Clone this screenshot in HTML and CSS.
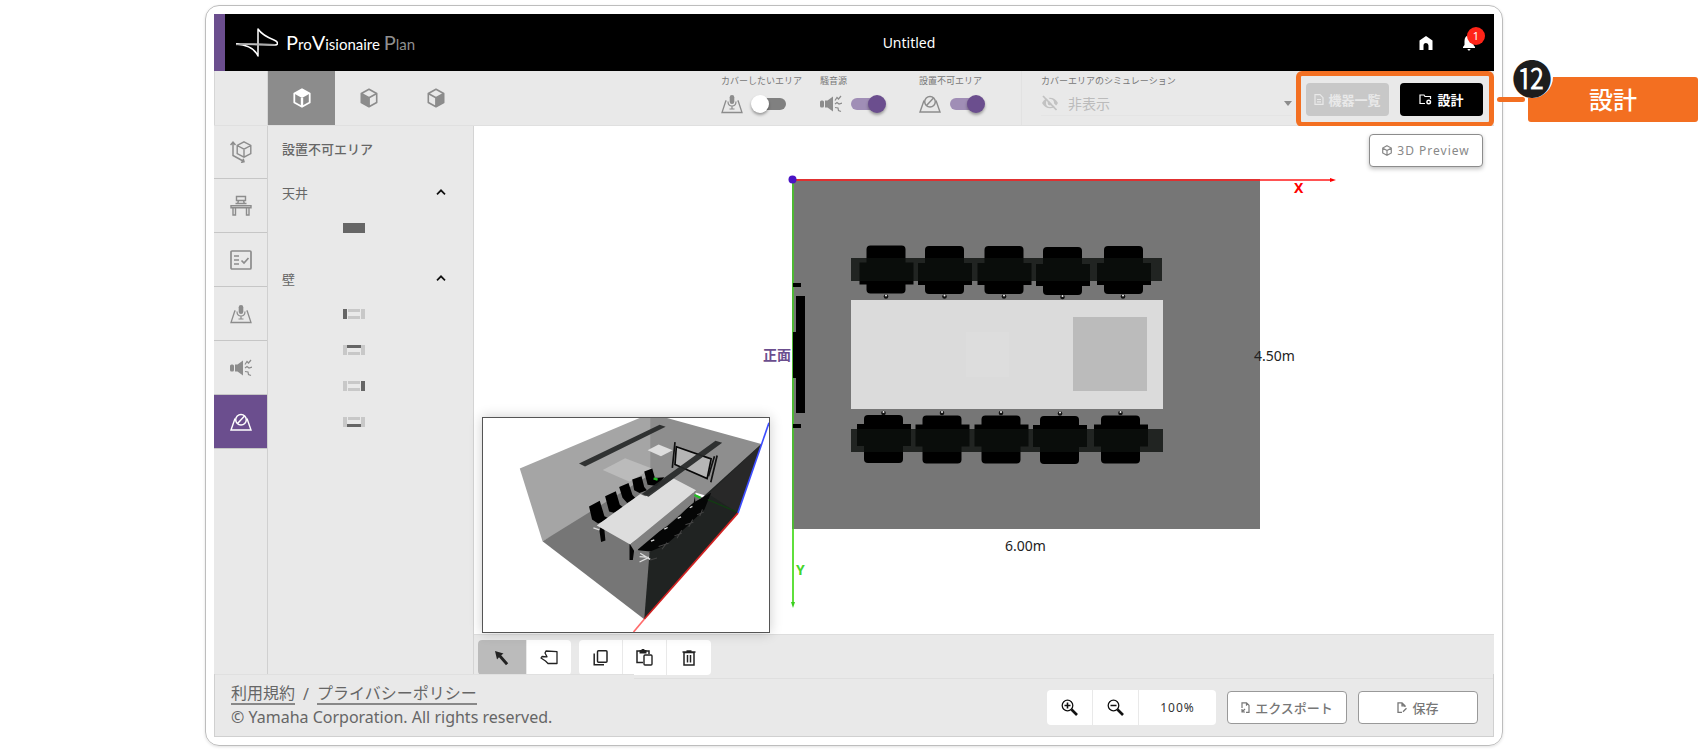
FILE: index.html
```html
<!DOCTYPE html>
<html lang="ja">
<head>
<meta charset="utf-8">
<title>ProVisionaire Plan</title>
<link rel="stylesheet" href="styles.css">
</head>
<body>
<svg class="defs" aria-hidden="true">
  <symbol id="i-mic" viewBox="0 0 22 20"><path d="M5.500 7H4.800L1 18.500h20L17.200 7h-.7" fill="none" stroke="currentColor" stroke-width="1.300"/><rect x="8.700" y="1" width="4.600" height="9" rx="2.300" fill="currentColor"/><path d="M7 7.500c0 3 1.300 4.500 4 4.500s4-1.500 4-4.500M11 12v3M8.500 15h5" fill="none" stroke="currentColor" stroke-width="1.200"/></symbol>
  <symbol id="i-noise" viewBox="0 0 22 20"><rect x="0" y="6.500" width="4" height="7" rx="1.500" fill="currentColor"/><path d="M5 6.500h2.500L13 2.500v15l-5.500-4H5z" fill="currentColor"/><path d="M15 6.500l2-3 1.500 1.500 2.500-3M15 10l2-1.500 2 1.500 3-1M15 13.500l3 .5.500 2.500 2.500 1" fill="none" stroke="currentColor" stroke-width="1.200"/></symbol>
  <symbol id="i-ban" viewBox="0 0 22 20"><path d="M5 6.500L1 18h20L17 6.500" fill="none" stroke="currentColor" stroke-width="1.400"/><circle cx="11" cy="7.800" r="5.300" fill="none" stroke="currentColor" stroke-width="1.500"/><path d="M7.500 11.500l7-7.500" stroke="currentColor" stroke-width="1.500"/></symbol>
</svg>
<div class="page">
<div class="card">
<div class="app">
  <header class="header">
    <div class="logo">
      <svg class="mark" viewBox="0 0 42 30" aria-hidden="true"><path d="M0 16c9 .5 18 3 22 12V1c4 6 11 9 16 11 5 2 4 5 1 5z" fill="none" stroke="#fff" stroke-width="1.500" stroke-linejoin="round"/><path d="M0 16.500c10-1 25-.5 39 .2" stroke="#aaa" stroke-width="1.600" fill="none"/></svg>
      <span class="wordmark"><b>P</b>ro<b>V</b>isionaire <span><b>P</b>lan</span></span>
    </div>
    <h1 class="title">Untitled</h1>
    <div class="header-actions">
      <button class="icon-btn" aria-label="ホーム"><svg width="14" height="14" viewBox="0 0 14 14"><path d="M7 0l6.500 4.500V14H9.500V9.500a2.500 2.500 0 0 0-5 0V14H.5V4.500z" fill="#fff"/></svg></button>
      <button class="icon-btn" aria-label="通知"><svg width="14" height="16" viewBox="0 0 14 16"><path d="M7 0c3 .5 4.500 3 4.500 6v4L13 12v1H1v-1l1.500-2V6C2.500 3 4 .5 7 0zM5.500 14h3c-.5 2-2.500 2-3 0z" fill="#fff"/></svg><span class="badge">1</span></button>
    </div>
  </header>

  <div class="toolbar">
    <div class="corner"></div>
    <nav class="views">
      <button class="view active" aria-label="上面"><svg width="18" height="20" viewBox="0 0 18 20"><path d="M9 1.200l7.700 4.300v9L9 18.800l-7.700-4.300v-9z" fill="none" stroke="#fff" stroke-width="1.800" stroke-linejoin="round"/><path d="M9 1l8 4.500L9 10 1 5.500z" fill="#fff"/><path d="M9 10v9" stroke="#fff" stroke-width="2.400"/></svg></button>
      <button class="view" aria-label="正面"><svg width="18" height="20" viewBox="0 0 18 20"><path d="M9 1.200l7.700 4.300v9L9 18.800l-7.700-4.300v-9zM1.300 5.500L9 9.800l7.700-4.300M9 9.800v9" fill="none" stroke="#8c8c8c" stroke-width="1.600" stroke-linejoin="round"/><path d="M1.300 5.500L9.500 10v9l-8.200-4.500z" fill="#8c8c8c"/></svg></button>
      <button class="view" aria-label="側面"><svg width="18" height="20" viewBox="0 0 18 20"><path d="M9 1.200l7.700 4.300v9L9 18.800l-7.700-4.300v-9zM1.300 5.500L9 9.800l7.700-4.300M9 9.800v9" fill="none" stroke="#8c8c8c" stroke-width="1.600" stroke-linejoin="round"/><path d="M16.700 5.500L8.500 10v9l8.200-4.500z" fill="#8c8c8c"/></svg></button>
    </nav>
    <div class="switches">
      <label class="switch"><span class="caption">カバーしたいエリア</span><span class="switch-row"><svg class="ic"><use href="#i-mic"/></svg><input type="checkbox"></span></label>
      <label class="switch"><span class="caption">騒音源</span><span class="switch-row"><svg class="ic"><use href="#i-noise"/></svg><input type="checkbox" checked></span></label>
      <label class="switch"><span class="caption">設置不可エリア</span><span class="switch-row"><svg class="ic"><use href="#i-ban"/></svg><input type="checkbox" checked></span></label>
    </div>
    <div class="simulation">
      <label class="caption" for="sim">カバーエリアのシミュレーション</label>
      <div class="sim-row">
        <svg width="18" height="16" viewBox="0 0 18 16"><path d="M1 8c3.500-7 12.500-7 16 0-3.500 7-12.500 7-16 0z" fill="#c2c2c2"/><circle cx="9" cy="8" r="3.200" fill="none" stroke="#e9e9e9" stroke-width="1.600"/><path d="M3.500 0L17 14" stroke="#e9e9e9" stroke-width="2"/><path d="M2 1l13.500 14" stroke="#c2c2c2" stroke-width="1.800"/></svg>
        <select id="sim" disabled><option>非表示</option></select>
        <svg class="drop" width="8" height="5" viewBox="0 0 8 5"><path d="M0 0h8L4 5z" fill="#8c8c8c"/></svg>
      </div>
    </div>
    <div class="modes">
      <button class="mode off"><svg width="10" height="11" viewBox="0 0 10 11"><path d="M1 .7h5L9 3.700v6.600H1zM3 5.500h4M3 7.800h4" fill="none" stroke="currentColor" stroke-width="1.200"/></svg>機器一覧</button>
      <button class="mode on"><svg width="13" height="11" viewBox="0 0 13 11"><path d="M6 9.500H1V1h4l1 1.500h5.500V5" fill="none" stroke="currentColor" stroke-width="1.200"/><circle cx="9.700" cy="8" r="1.800" fill="none" stroke="currentColor" stroke-width="1.400"/></svg>設計</button>
    </div>
  </div>

  <main class="main">
    <nav class="rail">
      <button aria-label="空間"><svg width="22" height="22" viewBox="0 0 22 22"><path d="M14 .8l6.800 3.700v8L14 16.200l-6.800-3.700v-8zM7.200 4.500L14 8.200l6.800-3.700M14 8.200v8" fill="none" stroke="currentColor" stroke-width="1.400"/><path d="M3 2v12.500l10 5.500M.5 4L3 1.200 5.500 4M11 21.500l3-.8-.8-3" fill="none" stroke="currentColor" stroke-width="1.500"/></svg></button>
      <button aria-label="家具"><svg width="22" height="22" viewBox="0 0 22 22"><path d="M6.500 1.500h9v4h-9zM8.500 5.500l-.8 3M13.500 5.500l.8 3M5.500 8.500h11M1 10.700h20v2H1zM3 12.700V20h2.500v-7.300M16.500 12.700V20H19v-7.300" fill="none" stroke="currentColor" stroke-width="1.400"/></svg></button>
      <button aria-label="条件"><svg width="22" height="22" viewBox="0 0 22 22"><rect x="1" y="2" width="20" height="18" rx="1" fill="none" stroke="currentColor" stroke-width="1.700"/><path d="M4 7h5M4 11h5M4 15h5M11.500 11.500l2.500 2.500 4.500-5" fill="none" stroke="currentColor" stroke-width="1.700"/></svg></button>
      <button aria-label="カバーしたいエリア"><svg class="ic"><use href="#i-mic"/></svg></button>
      <button aria-label="騒音源"><svg class="ic"><use href="#i-noise"/></svg></button>
      <button class="active" aria-label="設置不可エリア"><svg class="ic"><use href="#i-ban"/></svg></button>
    </nav>

    <aside class="panel">
      <h2>設置不可エリア</h2>
      <section>
        <button class="section-head">天井<svg width="10" height="6" viewBox="0 0 10 6"><path d="M1 5.300L5 1.300l4 4" fill="none" stroke="#111" stroke-width="1.700"/></svg></button>
        <button class="part" aria-label="天井"><svg width="22" height="10"><rect width="22" height="10" fill="#666"/></svg></button>
      </section>
      <section>
        <button class="section-head">壁<svg width="10" height="6" viewBox="0 0 10 6"><path d="M1 5.300L5 1.300l4 4" fill="none" stroke="#111" stroke-width="1.700"/></svg></button>
        <button class="part" aria-label="左の壁"><svg width="22" height="10" fill="#c8c8c8"><rect width="4" height="10" fill="#666"/><rect x="5" width="12" height="3"/><rect x="5" y="7" width="12" height="3"/><rect x="18" width="4" height="10"/></svg></button>
        <button class="part" aria-label="上の壁"><svg width="22" height="10" fill="#c8c8c8"><rect width="4" height="10"/><rect x="4" width="14" height="3" fill="#666"/><rect x="5" y="7" width="12" height="3"/><rect x="18" width="4" height="10"/></svg></button>
        <button class="part" aria-label="右の壁"><svg width="22" height="10" fill="#c8c8c8"><rect width="4" height="10"/><rect x="5" width="12" height="3"/><rect x="5" y="7" width="12" height="3"/><rect x="18" width="4" height="10" fill="#666"/></svg></button>
        <button class="part" aria-label="下の壁"><svg width="22" height="10" fill="#c8c8c8"><rect width="4" height="10"/><rect x="5" width="12" height="3"/><rect x="4" y="7" width="14" height="3" fill="#666"/><rect x="18" width="4" height="10"/></svg></button>
      </section>
    </aside>

    <div class="workspace">
      <div class="canvas">
        <svg class="plan" viewBox="0 0 1020 508" preserveAspectRatio="xMidYMid meet">
          <defs>
            <g id="seat"><rect x="-7" y="17" width="54" height="22" fill="#000"/><rect width="39" height="48" rx="4" fill="#000"/></g>
            <g id="seat2"><rect x="-7" y="9" width="54" height="22" fill="#000"/><rect width="39" height="48" rx="4" fill="#000"/></g>
            <g id="peg"><circle r="2.300" fill="#111"/><circle cy="-1" r="1" fill="#eee"/></g>
          </defs>
          <rect x="319" y="54" width="467" height="349" fill="#767676"/>
          <use href="#seat" x="392.500" y="119.500"/><use href="#seat" x="451" y="120"/><use href="#seat" x="510.500" y="120"/><use href="#seat" x="569" y="121"/><use href="#seat" x="630" y="120"/>
          <use href="#seat2" x="390" y="289"/><use href="#seat2" x="448.500" y="289.500"/><use href="#seat2" x="507.500" y="289.500"/><use href="#seat2" x="566" y="290"/><use href="#seat2" x="627" y="289.500"/>
          <rect x="377" y="132" width="311" height="23" fill="#0c100e" fill-opacity=".8"/>
          <rect x="377" y="303" width="312" height="23" fill="#0c100e" fill-opacity=".8"/>
          <use href="#peg" x="412" y="170.500"/><use href="#peg" x="470.500" y="170.500"/><use href="#peg" x="530" y="170.500"/><use href="#peg" x="588.500" y="171"/><use href="#peg" x="649" y="170.500"/>
          <use href="#peg" x="409.500" y="287"/><use href="#peg" x="468" y="287"/><use href="#peg" x="527" y="287"/><use href="#peg" x="586" y="287.500"/><use href="#peg" x="646.500" y="287"/>
          <rect x="377" y="174" width="312" height="109" fill="#dbdbdb"/>
          <rect x="492" y="206" width="43" height="45" fill="#ddd"/>
          <rect x="599" y="191" width="74" height="74" fill="#bbb"/>
          <path d="M319 54v425" stroke="#4db833" stroke-width="2"/>
          <path d="M319 403v75" stroke="#5fe03c" stroke-width="2"/>
          <path d="M319 482l-2-6h4z" fill="#3bd01f"/>
          <path d="M322 170h9v117h-9v-35h-3v-46h3zM319 157h8v4h-8zM319 298h8v4h-8z" fill="#000"/>
          <path d="M319 54h467" stroke="#e03030" stroke-width="2"/>
          <path d="M786 54h72" stroke="#ff1a1a" stroke-width="1.500"/>
          <path d="M862 54l-6-2v4z" fill="#f00"/>
          <circle cx="318.500" cy="53.500" r="4" fill="#4a14c4"/>
          <text class="axis" x="820" y="67" fill="#f00">X</text>
          <text class="axis" x="322" y="449" fill="#46d52b">Y</text>
          <text class="front" x="289" y="234">正面</text>
          <text class="dim" x="780" y="235">4.50m</text>
          <text class="dim" x="531" y="425">6.00m</text>
        </svg>
        <button class="preview-btn"><svg width="10" height="11" viewBox="0 0 10 11"><path d="M5 .7l4.300 2.400v4.800L5 10.300.7 7.900V3.100zM.7 3.100L5 5.500l4.300-2.400M5 5.500v4.800" fill="none" stroke="currentColor" stroke-width="1.200"/></svg>3D Preview</button>
        <div class="inset">
          <svg viewBox="40 56 855 639" preserveAspectRatio="none">
            <path d="M150 207L508 56h34v190L218 424z" fill="#a5a5a5"/>
            <path d="M540 56h50l282 78-162 155-170-50z" fill="#8e8e8e"/>
            <path d="M218 424L540 225l262 115-280 317z" fill="#767676"/>
            <path d="M872 134l-70 206-280 317 16-200 165-170z" fill="#202322"/>
            <path d="M872 134l-70 206-88-57z" fill="#282828"/>
            <path d="M398 211l67-35 80 31-67 39z" fill="#bbb"/>
            <path d="M532 152l33-17 42 17-35 18z" fill="#ddd"/>
            <path d="M618 142l104 36-12 59-96-42z" fill="#b5b5b5" stroke="#080808" stroke-width="5"/>
            <path d="M614 128l-8 77M740 168l-19 80M732 170l-18 60" stroke="#111" stroke-width="5"/>
            <path d="M357 320l32-17 14 46 16 8-35 14-18-12zM405 290l32-15 12 40 12 9-30 15-14-4zM447 262l28-12 12 36 10 10-26 14-14-16zM486 240l28-10 8 32 8 10-22 8-16-8zM522 216l24-9 8 28 28-2-22 26-28-4z" fill="#000"/>
            <path d="M392 380h10l4 42-13 4-5-34zM478 430l18-10-8 60h-10zM664 290l9-15 2 40-14 4z" fill="#050505"/>
            <path d="M494 425l18 6 40-28 38-24 40-34 34-34 58-32-20 50-60 58-56 48-46 20-36-4z" fill="#050606"/>
            <path d="M508 470l28 2m-28 14l28-14m-26-12l30 18M370 384l18 6M542 424l10-4M582 388l10-5M622 356l10-5M658 324l8-4" stroke="#ddd" stroke-width="4" fill="none"/>
            <path d="M565 440l30-10m-20 18l15-20M612 408l22-8m-14 15l14-24M645 375l24-8m-14 14l12-22M680 345l20-8m-12 12l8-20M540 480l20-6" stroke="#444" stroke-width="3" fill="none"/>
            <path d="M480 434l197-162-7 36-176 148z" fill="#808080"/>
            <path d="M380 377l130-94 15 7 85-53 67 35-197 162z" fill="#ddd"/>
            <path d="M327 192l18 9 241-119-18-6zM515 283l20 8 220-161-20-6z" fill="#262828" fill-opacity=".92"/>
            <path d="M550 236l12 4M672 286l18 8" stroke="#1fc020" stroke-width="7"/>
            <path d="M712 300l88 37" stroke="#123c12" stroke-width="4"/>
            <path d="M895 70l-93 270" stroke="#3d4dff" stroke-width="5"/>
            <path d="M802 340L522 657" stroke="#d12222" stroke-width="5"/>
            <path d="M522 657l-32 38" stroke="#ff6b6b" stroke-width="5"/>
          </svg>
        </div>
      </div>
      <div class="tools">
        <div class="group">
          <button class="active" aria-label="選択"><svg width="14" height="16" viewBox="0 0 14 16"><path d="M0 1l8.500 2.500-2.300 1.800 7 8-2.200 2-7-8L2 9.500z" fill="#222"/></svg></button>
          <button aria-label="移動"><svg width="18" height="15" viewBox="0 0 18 15"><path d="M6 1l11 .7V13.500H8L5.500 11 1 8l1-1.500 5 .3L5 3z" fill="none" stroke="#222" stroke-width="1.300" stroke-linejoin="round"/></svg></button>
        </div>
        <div class="group">
          <button aria-label="コピー"><svg width="15" height="16" viewBox="0 0 15 16"><rect x="4.500" y=".8" width="9.500" height="11.500" rx="1" fill="none" stroke="#222" stroke-width="1.500"/><path d="M1.200 3.500v11.200H11" fill="none" stroke="#222" stroke-width="1.500"/></svg></button>
          <button aria-label="貼り付け"><svg width="17" height="17" viewBox="0 0 17 17"><path d="M7 13.500H1V2h12v3" fill="none" stroke="#222" stroke-width="1.500"/><path d="M3.500 1h2a1.500 1.500 0 0 1 3 0h2v3.500h-7z" fill="#222"/><rect x="8" y="6" width="8" height="10" rx="1" fill="none" stroke="#222" stroke-width="1.400"/></svg></button>
          <button aria-label="削除"><svg width="14" height="16" viewBox="0 0 14 16"><path d="M2 2.500h10V15H2zM.5 2h13M4.500 1h5M5.500 5v7.500M8.500 5v7.500" fill="none" stroke="#222" stroke-width="1.500"/></svg></button>
        </div>
      </div>
    </div>
  </main>

  <footer class="footer">
    <div class="legal">
      <div class="links"><a href="#terms">利用規約</a><span>/</span><a href="#privacy">プライバシーポリシー</a></div>
      <div>© Yamaha Corporation. All rights reserved.</div>
    </div>
    <div class="actions">
      <div class="group zoom">
        <button aria-label="拡大"><svg width="17" height="17" viewBox="0 0 17 17"><circle cx="6.500" cy="6.500" r="5.300" fill="none" stroke="#111" stroke-width="1.300"/><path d="M3.500 6.500h6M6.500 3.500v6" stroke="#111" stroke-width="1.600"/><path d="M10.500 10.500l5.500 5.500" stroke="#111" stroke-width="2.600"/></svg></button>
        <button aria-label="縮小"><svg width="17" height="17" viewBox="0 0 17 17"><circle cx="6.500" cy="6.500" r="5.300" fill="none" stroke="#111" stroke-width="1.300"/><path d="M3.500 6.500h6" stroke="#111" stroke-width="1.600"/><path d="M10.500 10.500l5.500 5.500" stroke="#111" stroke-width="2.600"/></svg></button>
        <output class="percent">100%</output>
      </div>
      <button class="outline"><svg width="9" height="11" viewBox="0 0 9 11"><path d="M1 6V.8h4.500L8 3.300v7H5M5.500.8v3M1 10l3-3M1 7v3h3" fill="none" stroke="currentColor" stroke-width="1.200"/></svg>エクスポート</button>
      <button class="outline"><svg width="10" height="11" viewBox="0 0 10 11"><path d="M5 10.300H1V.8h4L8 3.800V5M5 .8v3h3M6 9.800l3.500-3.500" fill="none" stroke="currentColor" stroke-width="1.300"/></svg>保存</button>
    </div>
  </footer>
</div>
</div>
<div class="callout"><span class="number">⓬</span><span class="callout-text">設計</span></div>
</div>
</body>
</html>
```
FILE: styles.css
```css
* { box-sizing: border-box; }
body { margin: 0; background: #fff; color: #666; font-family: "Noto Sans", "Noto Sans CJK JP", sans-serif; font-size: 13px; }
button, select { margin: 0; padding: 0; border: 0; background: none; color: inherit; font: inherit; }
button { display: flex; align-items: center; justify-content: center; cursor: pointer; }
svg { display: block; flex: none; }
.defs { position: absolute; width: 0; height: 0; }
.ic { width: 22px; height: 20px; }

.page { display: grid; grid-template-columns: minmax(0, 1fr) 205px; min-height: 100vh; padding: 5px 0 4px 205px; }
.card { display: flex; min-width: 0; padding: 8px; border: 1px solid #bdbdbd; border-radius: 14px; box-shadow: 0 1px 3px rgba(0, 0, 0, .12); }
.app { display: flex; flex: 1; flex-direction: column; min-width: 0; background: #e9e9e9; }

.header { display: grid; grid-template-columns: 189px 1fr 90px; align-items: center; height: 57px; border-left: 11px solid #6b4e8e; background: #000; color: #fff; }
.logo { display: flex; align-items: center; gap: 8px; padding-left: 11px; white-space: nowrap; }
.mark { width: 42px; height: 30px; }
.wordmark { font-family: Lato, sans-serif; font-size: 15px; line-height: 24px; }
.wordmark b { font-size: 20px; font-weight: 400; }
.wordmark span { color: #8f8f8f; }
.title { margin: 0; font-size: 14px; font-weight: 400; text-align: center; }
.header-actions { display: flex; gap: 29px; padding-left: 15px; }
.icon-btn { position: relative; }
.badge { position: absolute; top: -8px; right: -9px; width: 18px; height: 18px; border-radius: 9px; background: #ff2418; font-size: 11px; line-height: 18px; }

.toolbar { display: flex; height: 55px; border-bottom: 1px solid #e0e0e0; }
.corner { flex: none; width: 54px; border: 1px solid #d6d6d6; border-width: 0 1px 0 1px; }
.views { display: flex; flex: 1; }
.view { width: 67px; }
.view.active { background: #8c8c8c; }
.switches { display: grid; grid-template-columns: 99px 99px 102px; }
.switch { display: block; color: #8c8c8c; }
.caption { display: block; height: 20px; color: #777; font-size: 9px; line-height: 20px; white-space: nowrap; }
.switch-row { display: flex; align-items: center; gap: 8px; height: 26px; }
.switch input { position: relative; width: 36px; height: 18px; margin: 0; appearance: none; cursor: pointer; }
.switch input::before { content: ""; position: absolute; inset: 3px 1px 3px 1px; border-radius: 6px; background: #808080; }
.switch input::after { content: ""; position: absolute; top: 0; left: 0; width: 18px; height: 18px; border-radius: 9px; background: #fff; box-shadow: 0 2px 3px rgba(0, 0, 0, .35); }
.switch input:checked::before { background: #a08eb6; }
.switch input:checked::after { left: 18px; background: #6b4e8e; }
.simulation { width: 275px; padding: 0 4px 0 19px; border-left: 1px solid #e2e2e2; }
.sim-row { display: flex; align-items: center; gap: 9px; height: 25px; border-bottom: 1px solid #e4e4e4; color: #bbb; }
.sim-row select { flex: 1; appearance: none; color: #bbb; font-size: 14px; opacity: 1; }
.modes { display: flex; flex: none; gap: 11px; align-items: center; height: 56px; padding: 0 6px 0 5px; border: 5px solid #f36f21; border-radius: 6px; }
.mode { gap: 4px; width: 83px; height: 33px; border-radius: 4px; color: #fff; font-weight: 700; }
.mode.off { background: #c8c8c8; color: #e9e9e9; }
.mode.on { background: #000; gap: 5px; }

.main { display: grid; grid-template-columns: 54px 206px minmax(0, 1fr); flex: 1; }
.rail { border-right: 1px solid #d0d0d0; }
.rail button { width: 100%; height: 54px; border-bottom: 1px solid #c6c6c6; color: #8c8c8c; }
.rail button:first-child { height: 53px; }
.rail .active { background: #6b4e8e; color: #fff; }
.panel { padding-top: 11px; border-right: 1px solid #d4d4d4; }
.panel h2 { margin: 0 0 13px; padding-left: 14px; font-size: 13px; font-weight: 500; line-height: 24px; }
.panel section { margin-bottom: 14px; }
.section-head { justify-content: space-between; width: 100%; height: 36px; padding: 0 27px 0 14px; }
.part { height: 36px; margin-left: 75px; }

.workspace { display: flex; flex-direction: column; min-width: 0; }
.canvas { position: relative; flex: 1; min-height: 0; background: #fff; }
.plan { width: 100%; height: 100%; }
.axis { font-size: 14px; font-weight: 700; }
.front { fill: #6b4e8e; font-size: 14px; font-weight: 700; }
.dim { fill: #222; font-size: 14px; }
.preview-btn { position: absolute; top: 8px; right: 11px; gap: 5px; width: 114px; height: 33px; border: 1px solid #8c8c8c; border-radius: 4px; background: #fff; box-shadow: 0 2px 4px rgba(0, 0, 0, .25); color: #888; font-size: 12px; letter-spacing: 1px; }
.inset { position: absolute; bottom: 1px; left: 8px; width: 288px; height: 216px; border: 1px solid #555; background: #fff; box-shadow: 0 0 12px rgba(0, 0, 0, .2); }
.inset svg { width: 100%; height: 100%; }
.tools { display: flex; gap: 8px; height: 40px; padding: 5px 4px 0; border-top: 1px solid #ddd; }
.group { display: flex; height: 35px; overflow: hidden; border-radius: 4px; background: #fff; }
.group button { width: 44px; border-right: 1px solid #e9e9e9; }
.group .active { width: 49px; background: #bbb; }
.group button:last-child { border-right: 0; }

.footer { display: flex; height: 63px; border: 1px solid #d0d0d0; border-top: 0; }
.legal { width: 419px; padding: 7px 0 0 16px; border-top: 1px solid #e0e0e0; font-size: 16px; line-height: 24px; white-space: nowrap; }
.links { display: flex; gap: 8px; height: 23px; }
.links a { height: 23px; border-bottom: 2px solid #888; color: inherit; line-height: 22px; text-decoration: none; }
.actions { display: flex; flex: 1; gap: 11px; align-items: center; justify-content: flex-end; margin-top: 4px; padding-right: 15px; border-top: 1px solid #dfdfdf; }
.zoom button { width: 46px; }
.percent { width: 77px; color: #333; font-size: 12px; letter-spacing: 1px; line-height: 35px; text-align: center; }
.outline { gap: 5px; width: 120px; height: 33px; border: 1px solid #999; border-radius: 4px; background: #fff; color: #777; font-weight: 500; }

.callout { position: relative; height: 45px; margin: 72px 10px 0 25px; border-radius: 3px; background: #f36f21; color: #fff; font-size: 24px; font-weight: 500; line-height: 45px; text-align: center; }
.callout::before { content: ""; position: absolute; top: 20px; left: -31px; width: 28px; height: 5px; border-radius: 3px; background: #f36f21; }
.number { position: absolute; top: -21px; left: -17px; width: 42px; height: 42px; border-radius: 21px; background: #fff; color: #1d1d1d; font-family: "Noto Sans CJK JP", sans-serif; font-size: 40px; font-weight: 400; line-height: 42px; }
```
